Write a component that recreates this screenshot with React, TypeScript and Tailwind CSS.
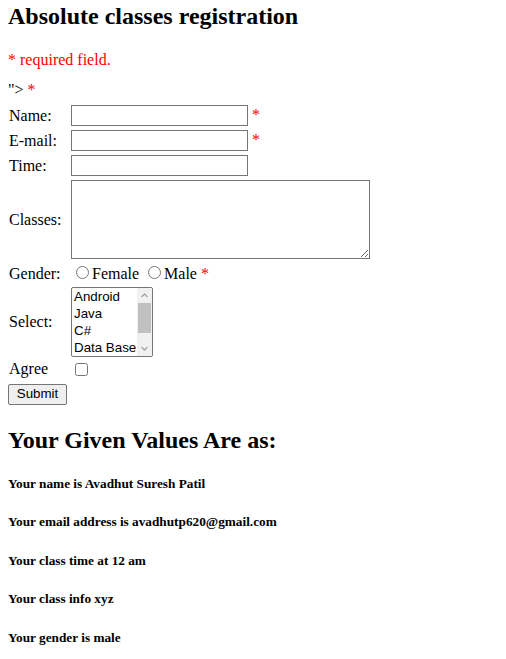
import React from 'react';

const serif = "font-['Liberation_Serif','Times_New_Roman',serif]";
const sans = "font-['Liberation_Sans',Arial,sans-serif] text-[13.33px]";

function Star() {
  return <span className="ml-[4px] text-[#ff0000]">*</span>;
}

function FieldRow({ label, children }: { label: string; children: React.ReactNode }) {
  return (
    <div className="flex items-center">
      <div className="w-[63px] shrink-0 pl-[1px]">{label}</div>
      {children}
    </div>
  );
}

function Chevron({ up }: { up?: boolean }) {
  return (
    <svg width="7" height="5" viewBox="0 0 7 5" fill="none">
      <path
        d={up ? 'M0.5 4L3.5 1L6.5 4' : 'M0.5 1L3.5 4L6.5 1'}
        stroke="#a3a3a3"
        strokeWidth="1.3"
      />
    </svg>
  );
}

// listbox made of divs so the scrollbar looks like the classic one
function ListBox({ options }: { options: string[] }) {
  return (
    <div className="flex h-[70px] w-[82px] overflow-hidden rounded-[2px] border border-[#767676] bg-white">
      <div className={`${sans} flex-1 overflow-hidden leading-[17px] text-black`}>
        {options.slice(0, 4).map((o) => (
          <div key={o} className="h-[17px] whitespace-nowrap px-[2px]">
            {o}
          </div>
        ))}
      </div>
      <div className="flex w-[15px] shrink-0 flex-col bg-[#f1f1f1]">
        <div className="flex h-[15px] items-center justify-center">
          <Chevron up />
        </div>
        <div className="mx-[1px] h-[30px] bg-[#c1c1c1]" />
        <div className="flex-1" />
        <div className="flex h-[15px] items-center justify-center">
          <Chevron />
        </div>
      </div>
    </div>
  );
}

const results = [
  'Your name is Avadhut Suresh Patil',
  'Your email address is avadhutp620@gmail.com',
  'Your class time at 12 am',
  'Your class info xyz',
  'Your gender is male',
];

export default function App() {
  return (
    <div className={`${serif} min-h-screen bg-white pl-2 pt-[3px] text-[16px] leading-[18px] text-black`}>
      {/* Registration heading */}
      <h2 className="text-[24px] font-bold leading-[27px]">Absolute classes registration</h2>
      <p className="mt-[21px] text-[#ff0000]">* required field.</p>
      <div className="mt-[12px]">
        "&gt; <span className="text-[#ff0000]">*</span>
      </div>

      {/* Form */}
      <form className="mt-[6px] flex flex-col" onSubmit={(e) => e.preventDefault()}>
        <FieldRow label="Name:">
          <div className="flex items-baseline">
            <input type="text" className={`${sans} h-[21px] w-[177px] border border-[#767676] px-[2px] py-[1px]`} />
            <Star />
          </div>
        </FieldRow>
        <div className="mt-[4px]">
          <FieldRow label="E-mail:">
            <div className="flex items-baseline">
              <input type="text" className={`${sans} h-[21px] w-[177px] border border-[#767676] px-[2px] py-[1px]`} />
              <Star />
            </div>
          </FieldRow>
        </div>
        <div className="mt-[4px]">
          <FieldRow label="Time:">
            <input type="text" className={`${sans} h-[21px] w-[177px] border border-[#767676] px-[2px] py-[1px]`} />
          </FieldRow>
        </div>
        <div className="mt-[4px]">
          <FieldRow label="Classes:">
            <textarea className={`${sans} h-[79px] w-[299px] border border-[#767676] p-[2px]`} />
          </FieldRow>
        </div>

        {/* Gender */}
        <div className="mt-[3.5px] flex h-[20px] items-baseline">
          <div className="w-[63px] shrink-0 pl-[1px]">Gender:</div>
          <div>
            <input type="radio" name="gender" className="ml-[5px] mr-[3px] mt-[3px] h-[13px] w-[13px]" />
            Female{' '}
            <input type="radio" name="gender" className="ml-[5px] mr-[3px] mt-[3px] h-[13px] w-[13px]" />
            Male <span className="text-[#ff0000]">*</span>
          </div>
        </div>

        <div className="mt-[4.5px]">
          <FieldRow label="Select:">
            <ListBox options={['Android', 'Java', 'C#', 'Data Base', 'Python']} />
          </FieldRow>
        </div>

        <div className="mt-[3px] flex h-[19px] items-start">
          <div className="w-[63px] shrink-0 pl-[1px]">Agree</div>
          <input type="checkbox" className="ml-[4px] mr-[3px] mt-[3px] h-[13px] w-[13px]" />
        </div>

        <div className="mt-[4.5px]">
          <button
            type="submit"
            className={`${sans} h-[21px] w-[59px] rounded-[2px] border border-[#767676] bg-[#efefef] px-[6px] text-black`}
          >
            Submit
          </button>
        </div>
      </form>

      {/* Submitted values */}
      <h2 className="mt-[22.5px] text-[24px] font-bold leading-[27px]">Your Given Values Are as:</h2>
      <div className="mt-[22px] flex flex-col gap-[22.4px] pb-4">
        {results.map((line) => (
          <h5 key={line} className="text-[13.28px] font-bold leading-[16px]">
            {line}
          </h5>
        ))}
      </div>
    </div>
  );
}
